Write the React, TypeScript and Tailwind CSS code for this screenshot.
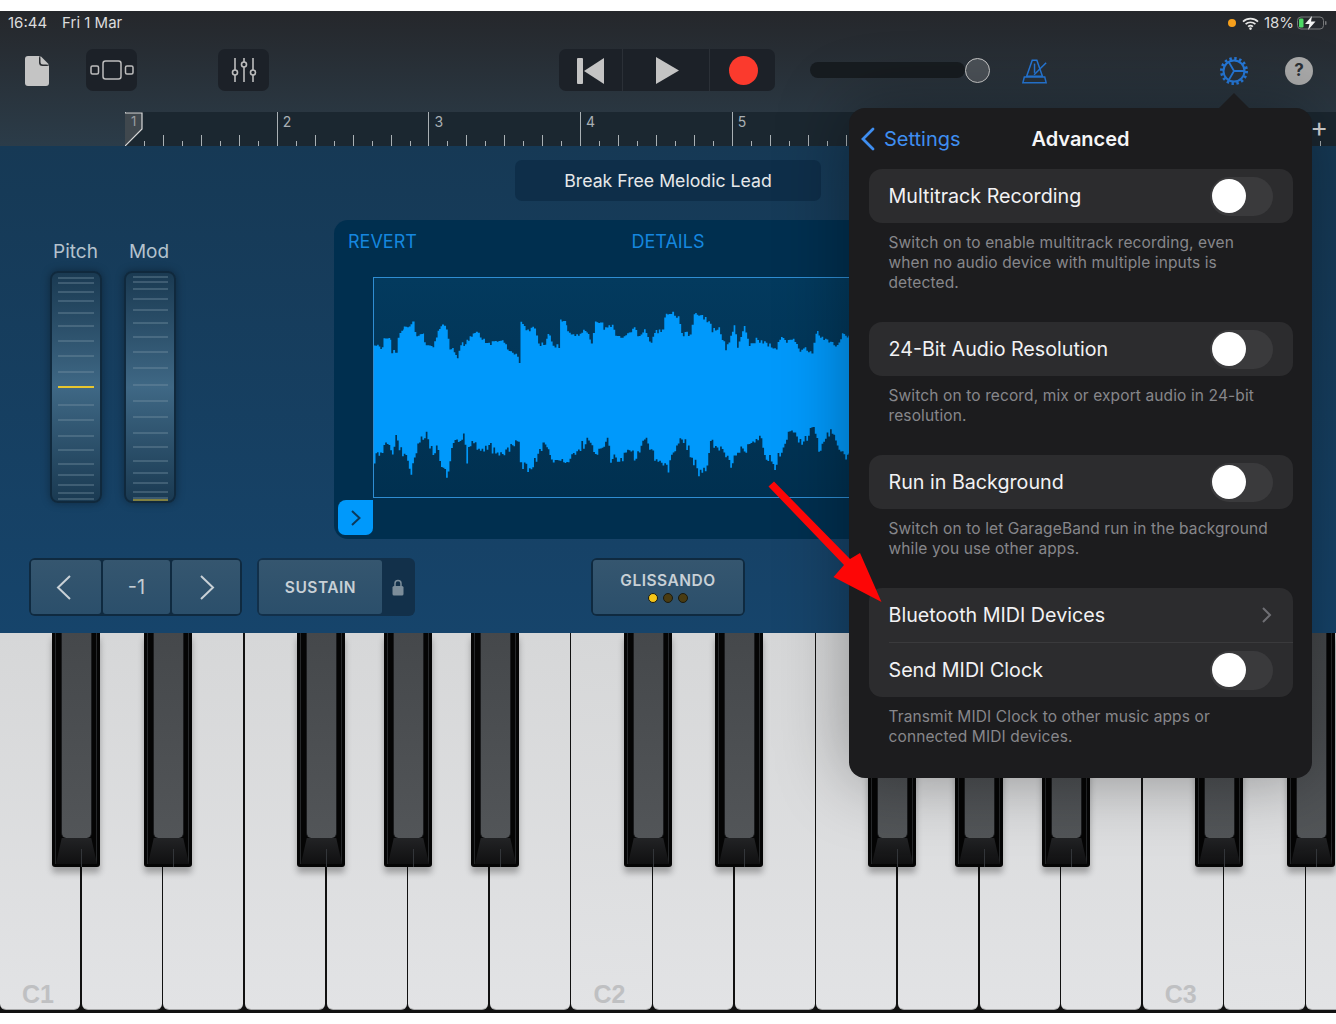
import React from "react";

const topEnv: [number, number][] = [[127,375],[155,385],[155,355],[175,350],[178,392],[195,392],[197,345],[213,330],[215,312],[225,325],[240,305],[247,340],[262,345],[272,340],[275,370],[300,375],[315,330],[328,308],[340,325],[350,385],[358,385],[372,408],[382,375],[405,360],[428,328],[440,355],[460,365],[490,368],[510,365],[520,390],[540,395],[555,425],[560,300],[570,310],[575,325],[600,325],[612,370],[632,368],[640,335],[655,380],[672,375],[677,300],[695,310],[698,335],[730,340],[755,330],[768,375],[780,298],[800,305],[805,325],[830,315],[845,350],[870,345],[895,318],[905,350],[925,325],[945,370],[955,335],[978,330],[985,285],[1003,272],[1025,290],[1035,340],[1060,340],[1072,280],[1090,285],[1120,305],[1125,330],[1145,320],[1165,385],[1190,320],[1200,375],[1220,310],[1235,380],[1255,355],[1275,365],[1315,385],[1325,350],[1345,365],[1365,348],[1385,400],[1400,378],[1420,400],[1432,332],[1450,350],[1470,360],[1490,380],[1510,340],[1534,345]];
const botEnv: [number, number][] = [[127,725],[145,700],[170,660],[185,700],[195,640],[205,685],[230,710],[240,760],[250,700],[285,635],[295,690],[320,690],[330,730],[345,770],[360,680],[395,640],[405,715],[415,670],[445,690],[470,680],[500,700],[530,685],[558,650],[565,730],[590,750],[625,680],[632,660],[650,710],[672,725],[700,720],[740,680],[770,660],[785,710],[820,660],[830,715],[860,720],[885,690],[900,710],[935,660],[950,690],[965,720],[1000,750],[1010,700],[1040,650],[1060,690],[1090,755],[1110,755],[1125,670],[1165,695],[1185,745],[1205,690],[1245,680],[1270,650],[1285,700],[1315,735],[1355,635],[1395,665],[1430,625],[1445,690],[1480,635],[1525,715],[1534,700]];

function sample(env: [number, number][], seedStart: number, amp: number) {
  let seed = seedStart;
  const rnd = () => {
    seed = (seed * 1103515245 + 12345) & 0x7fffffff;
    return ((seed >> 8) % 1000) / 1000 - 0.5;
  };
  const out: [number, number][] = [];
  for (let i = 0; i < env.length - 1; i++) {
    const [x0, y0] = env[i];
    const [x1, y1] = env[i + 1];
    const n = Math.max(1, Math.round((x1 - x0) / 5));
    for (let k = 0; k < n; k++) {
      const t = k / n;
      out.push([x0 + (x1 - x0) * t, y0 + (y1 - y0) * t + rnd() * amp]);
    }
  }
  return out;
}

function wavePath() {
  const t = sample(topEnv, 7, 15);
  const b = sample(botEnv, 91, 30).reverse();
  let d = `M127 ${t[0][1].toFixed(1)}`;
  t.forEach(([x, y]) => {
    d += `H${x.toFixed(1)}V${y.toFixed(1)}`;
  });
  d += "H1534V700";
  b.forEach(([x, y]) => {
    d += `H${x.toFixed(1)}V${y.toFixed(1)}`;
  });
  return d + "H127Z";
}
const WAVE = wavePath();

const FONT = { fontFamily: "Inter, 'Noto Sans', sans-serif" };

function Wheel({ lines, yellow, x1, x2 }: { lines: number[]; yellow: number; x1: number; x2: number }) {
  return (
    <div className="w-[52px] h-[232px] rounded-[8px] border-2 border-[#10293d] bg-gradient-to-b from-[#1a3a52] via-[#3f6885] to-[#1a3a52] shadow-[0_0_8px_rgba(0,0,0,0.35)] overflow-hidden">
      <svg width="48" height="228" viewBox="0 0 48 228" className="block">
        {lines.map((y) => (
          <line key={y} x1={x1} x2={x2} y1={y} y2={y} stroke="#7d97a8" strokeWidth="1" opacity="0.7" />
        ))}
        <line x1={x1} x2={x2} y1={yellow} y2={yellow} stroke="#e7c62e" strokeWidth={yellow > 200 ? 1 : 2} />
      </svg>
    </div>
  );
}

function Toggle() {
  return (
    <div className="w-[63px] h-[39px] rounded-full bg-[#3a3a3c] flex items-center pl-[2px] shrink-0">
      <div className="w-[34px] h-[34px] rounded-full bg-white" />
    </div>
  );
}

function SettingRow({ label, chevron }: { label: string; chevron?: boolean }) {
  return (
    <div className="h-[54px] flex items-center justify-between pl-[19.5px] pr-[20px]">
      <span className="text-[19.7px] text-[#f2f2f4] pt-[1px]">{label}</span>
      {chevron ? (
        <svg width="12" height="18" viewBox="0 0 12 18">
          <path d="M2 2l7 7-7 7" fill="none" stroke="#6f6f74" strokeWidth="2" />
        </svg>
      ) : (
        <Toggle />
      )}
    </div>
  );
}

function Foot({ children }: { children: React.ReactNode }) {
  return <div className="pt-[10px] pl-[19.5px] text-[15.5px] leading-[20px] text-[#87878b] tracking-[0.12px]">{children}</div>;
}

function RulerBar({ n }: { n: number }) {
  const ticks = [1, 2, 3, 4, 5, 6, 7];
  return (
    <div className="w-[151.7px] h-full shrink-0 relative flex items-end border-l border-[#a9b0b4]">
      {n <= 5 && <span className="absolute left-[5px] top-[2px] text-[14px] leading-[16px] text-[#a9b0b4]">{n}</span>}
      <div className="flex items-end h-full pl-[18px] gap-[18px]">
        {ticks.map((t) => (
          <div key={t} className={`w-px bg-[#a9b0b4] ${t % 2 === 0 ? "h-[11px]" : "h-[5px]"}`} />
        ))}
      </div>
    </div>
  );
}

const BLACK = [52, 144, 297, 384, 471, 624, 715, 868, 955, 1042, 1195, 1287];

function BlackKey({ left }: { left: number }) {
  return (
    <div
      className="absolute top-0 w-[48px] h-[234px] bg-[#050505] rounded-b-[3px] shadow-[0_6px_6px_rgba(0,0,0,0.28)]"
      style={{ left }}
    >
      <div className="absolute left-[3px] right-[3px] top-0 bottom-[3px] border-x border-[#26282a]" />
      <div className="absolute left-[9px] right-[8px] top-0 h-[205px] rounded-b-[5px] bg-gradient-to-b from-[#45484b] to-[#525558] border-x border-[#1b1c1e]" />
      <div className="absolute left-[4px] right-[3px] top-[205px] h-[26px] bg-gradient-to-b from-[#222325] to-[#101011] [clip-path:polygon(14%_0,86%_0,100%_100%,0_100%)]" />
      <div className="absolute left-[29px] top-[216px] w-px h-[18px] bg-[#33363a]" />
    </div>
  );
}

function WhiteKey({ label }: { label?: string }) {
  return (
    <div className="w-[80.14px] h-full shrink-0 rounded-b-[6px] bg-gradient-to-b from-[#d6d7d8] to-[#e2e3e5] border-b border-[#a7a8a9] flex items-end pl-[22px] pb-[2px]">
      {label && <span className="text-[25px] leading-[25px] font-bold text-[#bfc0c2] [font-family:'Liberation_Sans',sans-serif]">{label}</span>}
    </div>
  );
}

export default function App() {
  const pitch = [0, 5, 14, 23, 35, 48, 63, 78, 94, 127, 142, 158, 172, 186, 197, 207, 215, 221].map((v) => v + 5);
  const mod = [4, 9, 16, 26, 37, 50, 64, 79, 95, 112, 128, 144, 160, 174, 188, 200, 210, 219, 225].map((v) => v + 0);
  return (
    <div style={FONT} className="relative w-[1336px] h-[1024px] bg-white overflow-hidden pt-[11px]">
      {/* Top chrome */}
      <div className="bg-gradient-to-b from-[#25272b] to-[#2b3c49]">
        <div className="h-[24px] flex items-center justify-between pl-[8px] pr-[9px] text-[15px] text-[#dcdcdc]">
          <div className="flex gap-[15px]">
            <span>16:44</span>
            <span>Fri 1 Mar</span>
          </div>
          <div className="flex items-center">
            <div className="w-[8px] h-[8px] rounded-full bg-[#f7a01c] mr-[6px]" />
            <svg width="17" height="13" viewBox="0 0 17 13" className="mr-[5px]">
              <path d="M1 4.6a10.8 10.8 0 0 1 15 0M3.6 7.2a7.1 7.1 0 0 1 9.8 0M6.1 9.7a3.6 3.6 0 0 1 4.8 0" fill="none" stroke="#e6e6e6" strokeWidth="1.7" />
              <circle cx="8.5" cy="11.6" r="1.3" fill="#e6e6e6" />
            </svg>
            <span className="mr-[3px]">18%</span>
            <svg width="30" height="14" viewBox="0 0 30 14">
              <rect x="0.5" y="1" width="26" height="12" rx="3.5" fill="none" stroke="#77797b" />
              <rect x="2" y="2.5" width="4.5" height="9" rx="1.3" fill="#4cd964" />
              <path d="M15 0L8 8h4.5l-1.5 6 7.5-8.5H14z" fill="#f2f2f2" />
              <rect x="28" y="5" width="1.5" height="4" rx="0.7" fill="#77797b" />
            </svg>
          </div>
        </div>

        {/* Toolbar */}
        <div className="h-[77px] flex items-start pt-[14px]">
          <div className="w-[86px] pl-[25px] pt-[7px]">
            <svg width="24" height="30" viewBox="0 0 24 30" className="block">
              <path d="M3 0h11l10 10v17a3 3 0 0 1-3 3H3a3 3 0 0 1-3-3V3a3 3 0 0 1 3-3z" fill="#c4c4c4" />
              <path d="M14 0.5v6a3.5 3.5 0 0 0 3.5 3.5h6z" fill="#2a2d31" />
              <path d="M15.5 0l8.5 8.5h-6a2.5 2.5 0 0 1-2.5-2.5z" fill="#c4c4c4" />
            </svg>
          </div>
          <div className="w-[51px] h-[42px] rounded-[7px] bg-[#1c2128] flex items-center justify-center">
            <svg width="44" height="20" viewBox="0 0 44 20" fill="none" stroke="#bdbdbd" strokeWidth="1.5">
              <rect x="1" y="6" width="7.5" height="8" rx="1.5" />
              <rect x="13" y="1" width="18" height="18" rx="2.5" />
              <rect x="35.5" y="6" width="7.5" height="8" rx="1.5" />
            </svg>
          </div>
          <div className="w-[81px]" />
          <div className="w-[51px] h-[42px] rounded-[7px] bg-[#1c2128] flex items-center justify-center">
            <svg width="26" height="26" viewBox="0 0 26 26" fill="none" stroke="#bdbdbd" strokeWidth="1.6">
              <path d="M4 1v12M4 18v7M13 1v4M13 10v15M22 1v12M22 18v7" />
              <circle cx="4" cy="15.5" r="2.5" />
              <circle cx="13" cy="7.5" r="2.5" />
              <circle cx="22" cy="15.5" r="2.5" />
            </svg>
          </div>
          <div className="w-[290px]" />
          <div className="w-[216px] h-[42px] rounded-[7px] bg-[#1c2128] flex">
            <div className="w-[64px] pt-[1px] flex items-center justify-center border-r border-[#2b3037]">
              <svg width="28" height="26" viewBox="0 0 28 26">
                <rect x="0" y="0" width="6" height="26" rx="1" fill="#c4c4c4" />
                <path d="M27 0v26L7 13z" fill="#c4c4c4" />
              </svg>
            </div>
            <div className="w-[87px] pt-[1px] pl-[2px] flex items-center justify-center border-r border-[#2b3037]">
              <svg width="24" height="27" viewBox="0 0 24 27">
                <path d="M1 0l23 13.5L1 27z" fill="#c4c4c4" />
              </svg>
            </div>
            <div className="flex-1 pt-[1px] pl-[1px] flex items-center justify-center">
              <div className="w-[29px] h-[29px] rounded-full bg-[#fb3a2d]" />
            </div>
          </div>
          <div className="w-[35px]" />
          <div className="relative w-[155px] h-[16px] mt-[13px] rounded-full bg-[#171c20]">
            <div className="absolute left-[155px] top-[-4px] w-[25px] h-[25px] rounded-full bg-[#4b5157] border border-[#c8c8c8]" />
          </div>
          <div className="w-[57px]" />
          <svg width="26" height="27" viewBox="0 0 28 27" fill="none" stroke="#2678d8" strokeWidth="1.6" className="mt-[9px]">
            <path d="M11 1.5h5l6 17H5z" />
            <path d="M2.5 19.5h22l1.5 6H1z" />
            <path d="M13 17l13-13" />
            <path d="M13.5 5v10" />
          </svg>
          <div className="w-[170px]" />
          <svg width="32" height="32" viewBox="0 0 32 32" fill="none" stroke="#2678d8" className="mt-[6px]">
            <circle cx="16" cy="16" r="10.5" strokeWidth="2" />
            <circle cx="16" cy="16" r="12.5" strokeWidth="3" strokeDasharray="2.4 2.5" />
            <path d="M16 16L27 16M16 16L10.5 6.5M16 16L10.5 25.5" strokeWidth="1.8" />
          </svg>
          <div className="w-[35px]" />
          <div className="w-[28px] h-[28px] mt-[8px] rounded-full bg-[#a9a9a9] flex items-center justify-center text-[17px] font-bold text-[#2b3036]">?</div>
        </div>

        {/* Ruler */}
        <div className="h-[34px] flex">
          <div className="w-[125px] shrink-0" />
          <div className="relative flex-1 bg-[#1b2730] flex overflow-hidden">
            {[1, 2, 3, 4, 5, 6, 7, 8].map((n) => (
              <RulerBar key={n} n={n} />
            ))}
            <svg width="19" height="34" viewBox="0 0 19 34" className="absolute left-0 top-0">
              <path d="M0 1h17v16L0 34z" fill="#40484e" />
              <path d="M0 1h17v16L0 34" fill="none" stroke="#d8d8d8" strokeWidth="1.2" />
              <text x="6" y="14" fontSize="13" fill="#9a9fa3">1</text>
            </svg>
            <span className="absolute right-[8px] top-0 h-[34px] text-[27px] leading-[32px] text-[#d8d8d8]">+</span>
          </div>
        </div>
      </div>

      {/* Main */}
      <div className="h-[487px] bg-gradient-to-b from-[#163955] to-[#16446b] pt-[14px]">
        <div className="w-[306px] h-[41px] pt-[1px] mx-auto rounded-[7px] bg-[#0e2e49] flex items-center justify-center text-[17.7px] text-[#e6e8ea]">
          Break Free Melodic Lead
        </div>
        <div className="flex mt-[19px] pl-[50px]">
          <div className="w-[284px] pt-[21px]">
            <div className="flex gap-[22px] text-[19px] leading-[22px] text-[#b4c2cd]">
              <div className="w-[51px] text-center">Pitch</div>
              <div className="w-[52px] text-center">Mod</div>
            </div>
            <div className="flex gap-[22px] mt-[8px]">
              <Wheel lines={pitch} yellow={114} x1={6} x2={42} />
              <Wheel lines={mod} yellow={227} x1={7} x2={42} />
            </div>
          </div>
          <div className="w-[668px] h-[319px] rounded-[14px] bg-[#002f4f]">
            <div className="h-[57px] grid grid-cols-3 items-center pb-[14px] px-[14px] text-[18px] text-[#1587df]">
              <span>REVERT</span>
              <span className="text-center">DETAILS</span>
            </div>
            <div className="ml-[39px] h-[221px] border-t border-l border-b border-[#2f8dd2] bg-gradient-to-b from-[#033a5e] to-[#003050]">
              <svg width="476" height="219" viewBox="127 171 1407 660" preserveAspectRatio="none" className="block">
                <path d={WAVE} fill="#0099fb" />
              </svg>
            </div>
            <div className="ml-[4px] mt-[2px] w-[35px] h-[35px] rounded-tl-[8px] rounded-b-[7px] bg-[#0099fb] flex items-center justify-center">
              <svg width="12" height="18" viewBox="0 0 12 18">
                <path d="M2 2l7.5 7L2 16" fill="none" stroke="#0b3a5c" strokeWidth="2" />
              </svg>
            </div>
          </div>
        </div>
        <div className="flex mt-[19px] pl-[29px]">
          <div className="w-[213px] h-[58px] rounded-[6px] bg-[#0f2a40] p-[2px] flex gap-[2px] text-[#c3ccd3]">
            <div className="flex-1 rounded-[3px] bg-gradient-to-b from-[#35566f] to-[#2b4f6b] flex items-center justify-center pr-[4px]">
              <svg width="16" height="25" viewBox="0 0 16 25"><path d="M14 1L2 12.5 14 24" fill="none" stroke="#c9d1d7" strokeWidth="2" /></svg>
            </div>
            <div className="flex-1 rounded-[3px] bg-gradient-to-b from-[#35566f] to-[#2b4f6b] flex items-center justify-center text-[20px]">-1</div>
            <div className="flex-1 rounded-[3px] bg-gradient-to-b from-[#35566f] to-[#2b4f6b] flex items-center justify-center pl-[2px]">
              <svg width="16" height="25" viewBox="0 0 16 25"><path d="M2 1l12 11.5L2 24" fill="none" stroke="#c9d1d7" strokeWidth="2" /></svg>
            </div>
          </div>
          <div className="w-[158px] ml-[15px] h-[58px] rounded-[6px] bg-[#12304a] p-[2px] flex">
            <div className="w-[123px] pt-[1px] rounded-[3px] bg-gradient-to-b from-[#35566f] to-[#2b4f6b] flex items-center justify-center text-[15.5px] font-semibold tracking-[0.5px] text-[#c8d0d6]">SUSTAIN</div>
            <div className="flex-1 flex items-center justify-center">
              <svg width="12" height="17" viewBox="0 0 12 17">
                <path d="M3 7V4.5a3 3 0 0 1 6 0V7" fill="none" stroke="#7c8d9a" strokeWidth="1.5" />
                <rect x="0.5" y="7" width="11" height="9.5" rx="1.5" fill="#7c8d9a" />
              </svg>
            </div>
          </div>
          <div className="w-[154px] ml-[176px] h-[58px] rounded-[6px] bg-[#0f2a40] p-[2px]">
            <div className="h-full rounded-[3px] bg-gradient-to-b from-[#35566f] to-[#2b4f6b] flex flex-col items-center pt-[12px]">
              <span className="text-[15.5px] leading-[18px] font-semibold tracking-[0.5px] text-[#c8d0d6]">GLISSANDO</span>
              <div className="flex gap-[5px] mt-[3px]">
                <div className="w-[10px] h-[10px] rounded-full bg-[#f5c518] border border-[#1a1a10]" />
                <div className="w-[10px] h-[10px] rounded-full bg-[#4a3c12] border border-[#1a1a10]" />
                <div className="w-[10px] h-[10px] rounded-full bg-[#4a3c12] border border-[#1a1a10]" />
              </div>
            </div>
          </div>
        </div>
      </div>

      {/* Keyboard */}
      <div className="relative h-[380px] bg-[#111] pb-[3px] flex gap-[1.5px] overflow-hidden">
        {Array.from({ length: 17 }).map((_, i) => (
          <WhiteKey key={i} label={i === 0 ? "C1" : i === 7 ? "C2" : i === 14 ? "C3" : undefined} />
        ))}
        {BLACK.map((l) => (
          <BlackKey key={l} left={l} />
        ))}
      </div>

      {/* Settings popover */}
      <div className="absolute left-[849px] top-[108px] w-[463px] h-[670px] rounded-[16px] bg-[#1c1c1e] shadow-[0_0_70px_rgba(0,0,0,0.35)]">
        <div className="absolute left-[370px] top-[-15px] w-0 h-0 border-x-[15px] border-x-transparent border-b-[15px] border-b-[#1c1c1e]" />
        <div className="h-[61px] pt-[1px] relative flex items-center justify-center">
          <div className="absolute left-[11px] flex items-center gap-[9px] text-[#3f8ef0] text-[20px]">
            <svg width="15" height="24" viewBox="0 0 15 24">
              <path d="M13 2L3 12l10 10" fill="none" stroke="#3f8ef0" strokeWidth="2.8" strokeLinecap="round" />
            </svg>
            Settings
          </div>
          <span className="text-[20px] font-semibold text-[#f5f5f7]">Advanced</span>
        </div>
        <div className="pl-[20px] pr-[19px]">
          <div className="rounded-[13px] bg-[#2c2c2e]">
            <SettingRow label="Multitrack Recording" />
          </div>
          <Foot>
            Switch on to enable multitrack recording, even<br />
            when no audio device with multiple inputs is<br />
            detected.
          </Foot>
          <div className="mt-[29px] rounded-[13px] bg-[#2c2c2e]">
            <SettingRow label="24-Bit Audio Resolution" />
          </div>
          <Foot>
            Switch on to record, mix or export audio in 24-bit<br />
            resolution.
          </Foot>
          <div className="mt-[29px] rounded-[13px] bg-[#2c2c2e]">
            <SettingRow label="Run in Background" />
          </div>
          <Foot>
            Switch on to let GarageBand run in the background<br />
            while you use other apps.
          </Foot>
          <div className="mt-[29px] rounded-[13px] bg-[#2c2c2e]">
            <SettingRow label="Bluetooth MIDI Devices" chevron />
            <div className="ml-[20px] h-px bg-[#3a3a3c]" />
            <SettingRow label="Send MIDI Clock" />
          </div>
          <Foot>
            Transmit MIDI Clock to other music apps or<br />
            connected MIDI devices.
          </Foot>
        </div>
      </div>

      {/* Annotation arrow */}
      <svg width="130" height="140" viewBox="765 475 130 140" className="absolute left-[765px] top-[475px]">
        <path d="M768.5 486.5L774 481.5L850 559L860 553L881.5 602L833.5 577L844 565z" fill="#fd0606" />
      </svg>
    </div>
  );
}
